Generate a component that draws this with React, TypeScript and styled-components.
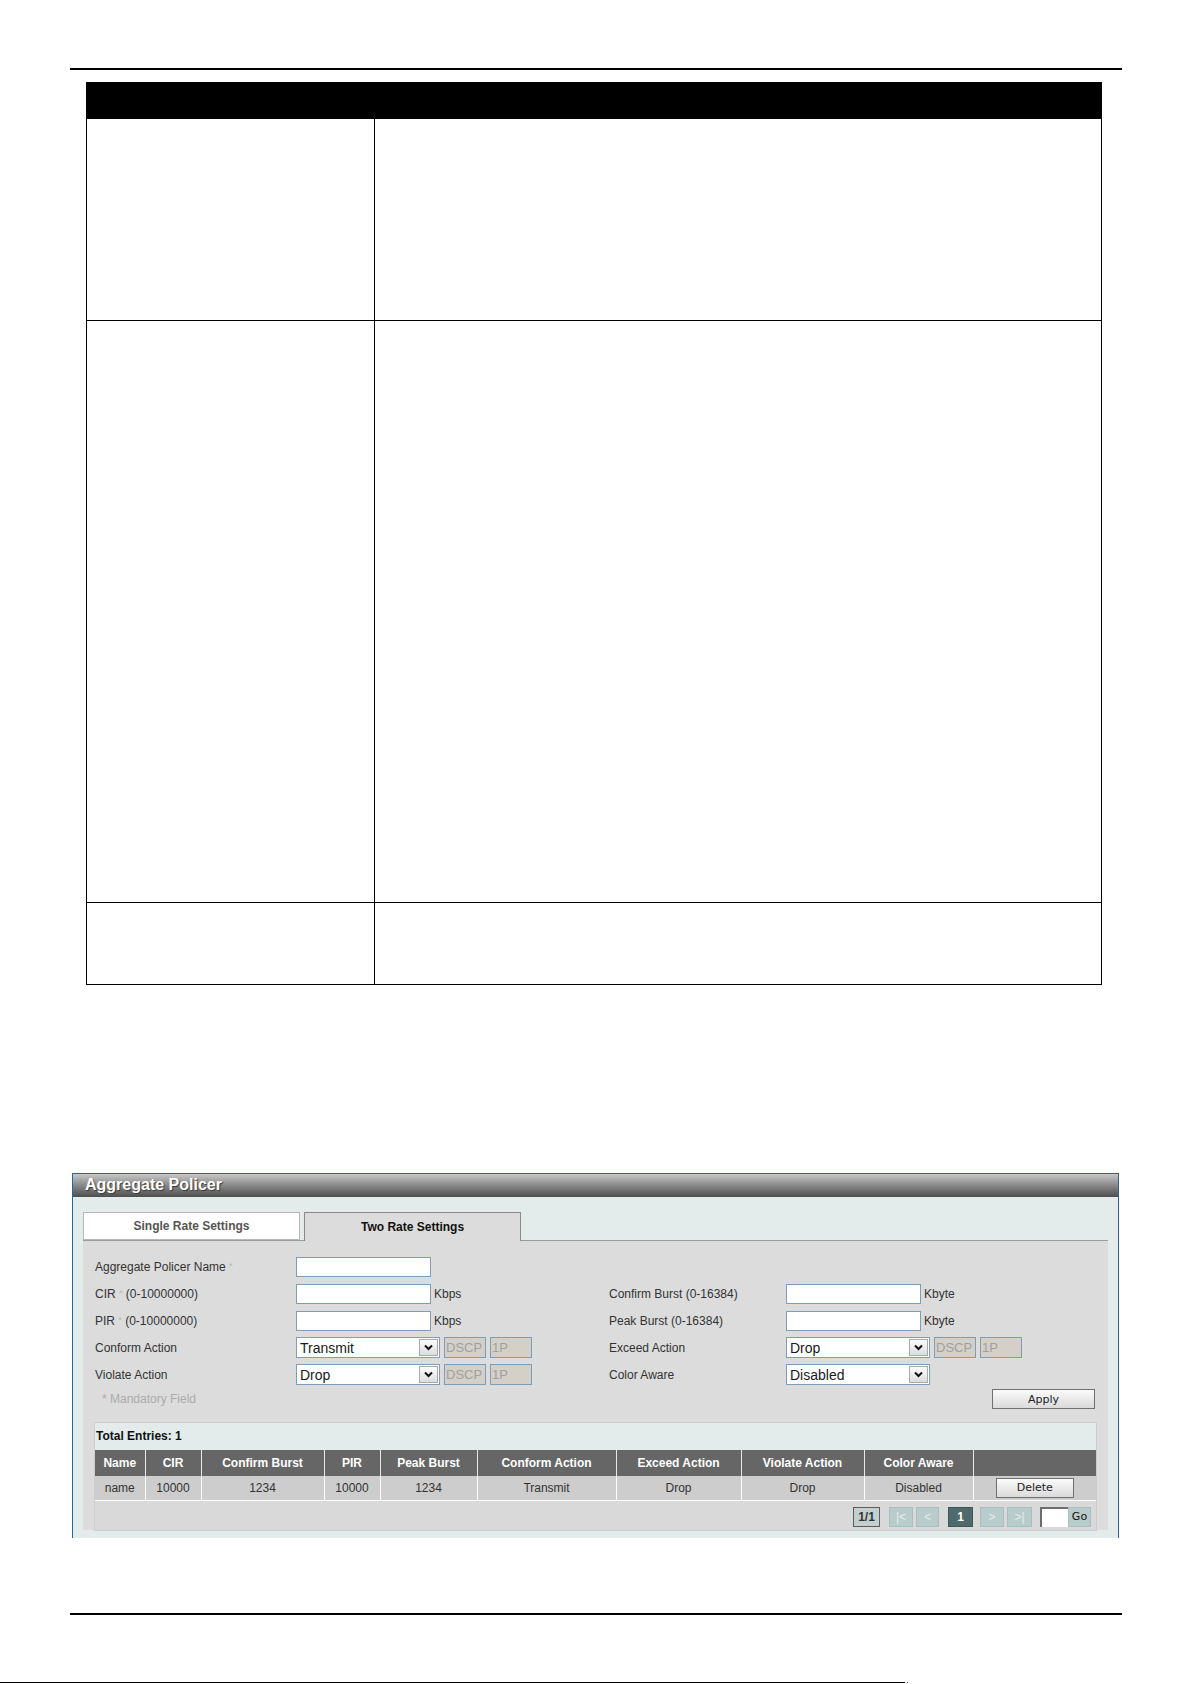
import React from "react";
import styled, { createGlobalStyle } from "styled-components";

const GlobalStyle = createGlobalStyle`
  html, body { margin: 0; padding: 0; background: #fff; }
  body {
    font-family: "Liberation Sans", Arial, sans-serif;
    font-size: 12px;
    color: #333;
  }
  * { box-sizing: border-box; }
`;

const Page = styled.div`
  width: 1192px;
  height: 1684px;
  overflow: hidden;
  display: flex;
  flex-direction: column;
`;

const Rule = styled.div<{ $top: number }>`
  flex: none;
  margin: ${(p) => p.$top}px 0 0 70px;
  width: 1052px;
  height: 2px;
  background: #000;
`;

/* ---------- parameter description table ---------- */
const SpecTable = styled.div`
  flex: none;
  margin: 12px 0 0 86px;
  width: 1016px;
`;

const SpecHead = styled.div`
  height: 37px;
  background: #000;
`;

const SpecRow = styled.div<{ $h: number }>`
  display: grid;
  grid-template-columns: 288px 1fr;
  height: ${(p) => p.$h}px;
  border-bottom: 1px solid #000;
`;

const SpecCell = styled.div`
  border-left: 1px solid #000;
  &:last-child {
    border-right: 1px solid #000;
  }
`;

/* ---------- Aggregate Policer window ---------- */
const Panel = styled.section`
  flex: none;
  margin: 188px 0 0 72px;
  width: 1047px;
  border: 1px solid #2c6593;
  border-bottom: none;
  background: #e4ebeb;
`;

const PanelTitle = styled.h2`
  margin: 0;
  height: 23px;
  padding-left: 12px;
  font: bold 16px/22px "Liberation Sans", Arial, sans-serif;
  color: #fff;
  text-shadow: 1px 1px 1px #3a3a3a;
  background: linear-gradient(#c8c8c8 0%, #8e8e8e 45%, #4e4e4e 100%);
`;

const PanelBody = styled.div`
  padding: 15px 10px 8px 10px;
`;

const TabBar = styled.div`
  display: flex;
  gap: 4px;
  height: 28px;
`;

const Tab = styled.div<{ $active?: boolean }>`
  position: relative;
  z-index: 1;
  width: 217px;
  height: ${(p) => (p.$active ? 29 : 28)}px;
  display: flex;
  align-items: center;
  justify-content: center;
  padding-bottom: ${(p) => (p.$active ? 1 : 0)}px;
  font-weight: bold;
  font-size: 12px;
  color: ${(p) => (p.$active ? "#111" : "#555")};
  background: ${(p) => (p.$active ? "#dcdcdc" : "#fff")};
  border: 1px solid ${(p) => (p.$active ? "#8a8a8a" : "#b8b8b8")};
  border-bottom: ${(p) => (p.$active ? "none" : "1px solid #b8b8b8")};
`;

const Content = styled.div`
  height: 290px;
  background: #dcdcdc;
  border-top: 1px solid #9a9a9a;
  padding: 12px 11px 0;
`;

const FormRow = styled.div`
  display: flex;
  align-items: center;
  height: 27px;
`;

const Field = styled.div<{ $w?: number }>`
  display: flex;
  align-items: center;
  flex: none;
  width: ${(p) => (p.$w ? `${p.$w}px` : "auto")};
`;

const Label = styled.span<{ $w: number }>`
  flex: none;
  width: ${(p) => p.$w}px;
  padding-left: 1px;
  font-size: 12px;
  color: #333;
  white-space: nowrap;
`;

const Req = styled.span`
  color: #b4b4b4;
  font-size: 9px;
  vertical-align: 2px;
`;

const TextInput = styled.input`
  width: 135px;
  height: 20px;
  margin: 0;
  padding: 0 2px;
  border: 1px solid #7f9db9;
  background: #fff;
  font: 13px "Liberation Sans", Arial, sans-serif;
  outline: none;
`;

const Unit = styled.span`
  margin-left: 3px;
  font-size: 12px;
  color: #333;
`;

const SelectBox = styled.div`
  width: 144px;
  height: 21px;
  display: flex;
  align-items: center;
  justify-content: space-between;
  padding: 0 1px 0 3px;
  border: 1px solid #7f9db9;
  background: #fff;
  font-size: 14px;
  color: #1a1a1a;
`;

const DropBtn = styled.span`
  width: 19px;
  height: 17px;
  display: flex;
  align-items: center;
  justify-content: center;
  border: 1px solid #a9a9a9;
  background: linear-gradient(#fdfdfd, #dcdcdc);
`;

const Tag = styled.span`
  width: 42px;
  height: 21px;
  margin-left: 4px;
  padding-left: 1px;
  display: flex;
  align-items: center;
  border: 1px solid #7f9db9;
  background: #d4d0c8;
  color: #a0a0a0;
  font-size: 13px;
`;

const ActionRow = styled.div`
  display: flex;
  align-items: center;
  justify-content: space-between;
  height: 22px;
`;

const Note = styled.span`
  padding-left: 8px;
  color: #ababab;
  font-size: 12px;
`;

const Button = styled.button<{ $w: number }>`
  width: ${(p) => p.$w}px;
  height: 20px;
  margin: 0;
  padding: 0;
  border: 1px solid #6f6f6f;
  background: linear-gradient(#fbfbfb, #dadada);
  font: 11px "DejaVu Sans", Verdana, sans-serif;
  color: #222;
`;

const ApplyButton = styled(Button)`
  margin-right: 2px;
`;

const EntriesBox = styled.div`
  margin-top: 12px;
  border: 1px solid #cdcdcd;
  background: #d9d9d9;
`;

const TotalEntries = styled.div`
  height: 27px;
  line-height: 27px;
  padding-left: 1px;
  background: #e4ebeb;
  font-weight: bold;
  font-size: 12px;
  color: #111;
`;

const Grid = styled.table`
  width: 100%;
  border-collapse: collapse;
  table-layout: fixed;
`;

const Th = styled.th`
  height: 26px;
  padding: 0;
  background: #666;
  color: #fff;
  font-weight: bold;
  font-size: 12px;
  text-align: center;
  border-right: 1px solid #e8e8e8;
  &:last-child {
    border-right: none;
  }
`;

const Td = styled.td`
  height: 24px;
  padding: 0;
  background: #cdcdcd;
  color: #333;
  font-size: 12px;
  text-align: center;
  border-right: 1px solid #fff;
  border-bottom: 1px solid #fff;
  &:last-child {
    border-right: none;
  }
`;

const Pager = styled.div`
  height: 29px;
  display: flex;
  align-items: flex-start;
  justify-content: flex-end;
  padding: 6px 5px 0 0;
`;

const PageInfo = styled.span`
  width: 27px;
  height: 20px;
  display: flex;
  align-items: center;
  justify-content: center;
  border: 1px solid #5c5c5c;
  background: #c3cfcf;
  font-weight: bold;
  font-size: 12px;
  color: #333;
`;

const NavBtn = styled.span<{ $w: number; $gap: number; $current?: boolean }>`
  width: ${(p) => p.$w}px;
  height: 20px;
  margin-left: ${(p) => p.$gap}px;
  display: flex;
  align-items: center;
  justify-content: center;
  border: 1px solid ${(p) => (p.$current ? "#3e5757" : "#a9bebe")};
  background: ${(p) => (p.$current ? "#4e6b6b" : "#b9cccc")};
  color: ${(p) => (p.$current ? "#fff" : "#e4eded")};
  font-weight: ${(p) => (p.$current ? "bold" : "normal")};
  font-size: 12px;
`;

const PageInput = styled.input`
  width: 28px;
  height: 20px;
  margin: 0 0 0 8px;
  padding: 0;
  border: none;
  border-top: 2px solid #6d6d6d;
  border-left: 2px solid #6d6d6d;
  background: #fff;
  outline: none;
`;

const GoBtn = styled.span`
  width: 23px;
  height: 20px;
  display: flex;
  align-items: center;
  justify-content: center;
  border: 1px solid #a9bebe;
  background: #b9cccc;
  font: 11px "DejaVu Sans", Verdana, sans-serif;
  color: #111;
`;

const FootLine = styled.div`
  flex: none;
  margin-top: 67px;
  display: flex;
  align-items: flex-end;
  gap: 2px;
`;

const FootStroke = styled.div`
  width: 905px;
  height: 1px;
  background: #000;
`;

const FootDot = styled.div`
  width: 1px;
  height: 1px;
  background: #444;
`;

const Chevron = () => (
  <svg width="9" height="7" viewBox="0 0 9 7">
    <path d="M1 1.5 L4.5 5 L8 1.5" fill="none" stroke="#111" strokeWidth="2" />
  </svg>
);

const Select = ({ value }: { value: string }) => (
  <SelectBox>
    <span>{value}</span>
    <DropBtn>
      <Chevron />
    </DropBtn>
  </SelectBox>
);

const columns: { title: string; width: number }[] = [
  { title: "Name", width: 50 },
  { title: "CIR", width: 56 },
  { title: "Confirm Burst", width: 123 },
  { title: "PIR", width: 56 },
  { title: "Peak Burst", width: 97 },
  { title: "Conform Action", width: 139 },
  { title: "Exceed Action", width: 125 },
  { title: "Violate Action", width: 123 },
  { title: "Color Aware", width: 109 },
  { title: "", width: 123 },
];

const entry = ["name", "10000", "1234", "10000", "1234", "Transmit", "Drop", "Drop", "Disabled"];

export default function App() {
  return (
    <Page>
      <GlobalStyle />
      <Rule $top={68} />

      <SpecTable>
        <SpecHead />
        <SpecRow $h={202}>
          <SpecCell />
          <SpecCell />
        </SpecRow>
        <SpecRow $h={582}>
          <SpecCell />
          <SpecCell />
        </SpecRow>
        <SpecRow $h={82}>
          <SpecCell />
          <SpecCell />
        </SpecRow>
      </SpecTable>

      <Panel>
        <PanelTitle>Aggregate Policer</PanelTitle>
        <PanelBody>
          <TabBar>
            <Tab>Single Rate Settings</Tab>
            <Tab $active>Two Rate Settings</Tab>
          </TabBar>
          <Content>
            <FormRow>
              <Field $w={514}>
                <Label $w={202}>
                  Aggregate Policer Name <Req>*</Req>
                </Label>
                <TextInput />
              </Field>
            </FormRow>
            <FormRow>
              <Field $w={514}>
                <Label $w={202}>
                  CIR <Req>*</Req> (0-10000000)
                </Label>
                <TextInput />
                <Unit>Kbps</Unit>
              </Field>
              <Field>
                <Label $w={178}>Confirm Burst (0-16384)</Label>
                <TextInput />
                <Unit>Kbyte</Unit>
              </Field>
            </FormRow>
            <FormRow>
              <Field $w={514}>
                <Label $w={202}>
                  PIR <Req>*</Req> (0-10000000)
                </Label>
                <TextInput />
                <Unit>Kbps</Unit>
              </Field>
              <Field>
                <Label $w={178}>Peak Burst (0-16384)</Label>
                <TextInput />
                <Unit>Kbyte</Unit>
              </Field>
            </FormRow>
            <FormRow>
              <Field $w={514}>
                <Label $w={202}>Conform Action</Label>
                <Select value="Transmit" />
                <Tag>DSCP</Tag>
                <Tag>1P</Tag>
              </Field>
              <Field>
                <Label $w={178}>Exceed Action</Label>
                <Select value="Drop" />
                <Tag>DSCP</Tag>
                <Tag>1P</Tag>
              </Field>
            </FormRow>
            <FormRow>
              <Field $w={514}>
                <Label $w={202}>Violate Action</Label>
                <Select value="Drop" />
                <Tag>DSCP</Tag>
                <Tag>1P</Tag>
              </Field>
              <Field>
                <Label $w={178}>Color Aware</Label>
                <Select value="Disabled" />
              </Field>
            </FormRow>
            <ActionRow>
              <Note>* Mandatory Field</Note>
              <ApplyButton $w={103}>Apply</ApplyButton>
            </ActionRow>

            <EntriesBox>
              <TotalEntries>Total Entries: 1</TotalEntries>
              <Grid>
                <colgroup>
                  {columns.map((c, i) => (
                    <col key={i} style={{ width: c.width }} />
                  ))}
                </colgroup>
                <thead>
                  <tr>
                    {columns.map((c, i) => (
                      <Th key={i}>{c.title}</Th>
                    ))}
                  </tr>
                </thead>
                <tbody>
                  <tr>
                    {entry.map((v, i) => (
                      <Td key={i}>{v}</Td>
                    ))}
                    <Td>
                      <Button $w={78}>Delete</Button>
                    </Td>
                  </tr>
                </tbody>
              </Grid>
              <Pager>
                <PageInfo>1/1</PageInfo>
                <NavBtn $w={24} $gap={9}>|&lt;</NavBtn>
                <NavBtn $w={23} $gap={3}>&lt;</NavBtn>
                <NavBtn $w={25} $gap={9} $current>1</NavBtn>
                <NavBtn $w={24} $gap={7}>&gt;</NavBtn>
                <NavBtn $w={25} $gap={3}>&gt;|</NavBtn>
                <PageInput />
                <GoBtn>Go</GoBtn>
              </Pager>
            </EntriesBox>
          </Content>
        </PanelBody>
      </Panel>

      <Rule $top={75} />
      <FootLine>
        <FootStroke />
        <FootDot />
      </FootLine>
    </Page>
  );
}
